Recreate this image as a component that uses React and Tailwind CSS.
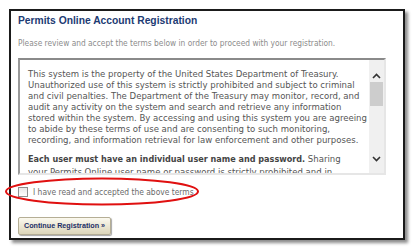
import React from "react";

const TERMS = [
  "This system is the property of the United States Department of Treasury.",
  "Unauthorized use of this system is strictly prohibited and subject to criminal",
  "and civil penalties. The Department of the Treasury may monitor, record, and",
  "audit any activity on the system and search and retrieve any information",
  "stored within the system. By accessing and using this system you are agreeing",
  "to abide by these terms of use and are consenting to such monitoring,",
  "recording, and information retrieval for law enforcement and other purposes.",
];

const FONT = { fontFamily: '"DejaVu Sans Condensed", "Liberation Sans", sans-serif' };
const ARIAL = { fontFamily: '"Liberation Sans", Arial, sans-serif' };

function Chevron({ up }) {
  return (
    <svg width="9" height="6" viewBox="0 0 9 6" className="block">
      <path
        d={up ? "M1 5 L4.5 1.5 L8 5" : "M1 1 L4.5 4.5 L8 1"}
        fill="none"
        stroke="#333"
        strokeWidth="1.6"
      />
    </svg>
  );
}

export default function App() {
  return (
    <div className="relative w-[417px] h-[252px] bg-white overflow-hidden" style={FONT}>
      <div className="ml-[9px] mt-[9px] w-[396px] h-[231px] border-2 border-[#1b1b1b] bg-white px-[7px] shadow-[3px_3px_3px_rgba(0,0,0,0.45)]">
        <h1 className="mt-[3px] text-[10.3px] leading-[14px] font-bold text-[#1d3b73]" style={ARIAL}>
          Permits Online Account Registration
        </h1>
        <p className="mt-[9px] text-[8.3px] leading-[12px] text-[#8c8c8c]">
          Please review and accept the terms below in order to proceed with your registration.
        </p>

        <div className="mt-[9px] flex h-[117px] w-[368px] border-2 border-t-[#8a8a8a] border-l-[#9a9a9a] border-r-[#e6e6e6] border-b-[#e6e6e6] bg-white">
          <div className="flex-1 overflow-hidden pl-[8px] pt-[8px] text-[9.5px] leading-[11px] text-[#555]">
            {TERMS.map((line) => (
              <div key={line} className="whitespace-nowrap">
                {line}
              </div>
            ))}
            <div className="mt-[7px] whitespace-nowrap leading-[13px]">
              <span className="text-[9px] font-bold text-[#444]">
                Each user must have an individual user name and password.
              </span>{" "}
              Sharing
            </div>
            <div className="whitespace-nowrap">
              your Permits Online user name or password is strictly prohibited and in
            </div>
          </div>
          <div className="flex w-[15px] flex-col items-center bg-[#f0f0f0]">
            <div className="mt-[13px]">
              <Chevron up />
            </div>
            <div className="mt-[3px] h-[24px] w-[13px] bg-[#cdcdcd]" />
            <div className="flex-1" />
            <div className="mb-[11px]">
              <Chevron />
            </div>
          </div>
        </div>

        <label className="mt-[11px] flex items-center gap-[5px] text-[8.4px] leading-[12px] text-[#6a6a6a]">
          <span className="block h-[10px] w-[10px] border border-[#8f8f8f] bg-gradient-to-b from-[#e8e8e8] to-white" />
          I have read and accepted the above terms
        </label>

        <button
          type="button"
          style={ARIAL}
          className="mt-[19px] h-[18px] rounded-[2px] border border-[#b5ae95] bg-gradient-to-b from-[#fbf9ef] to-[#ddd6b9] px-[5px] text-[7.2px] font-bold leading-[16px] text-[#1d2f66] shadow-[1px_1px_1px_rgba(0,0,0,0.35)]"
        >
          Continue Registration »
        </button>
      </div>

      <svg className="absolute left-[3px] top-[176px]" width="198" height="31" viewBox="0 0 198 31">
        <ellipse cx="99" cy="15.5" rx="96" ry="13" fill="none" stroke="#e01010" strokeWidth="2" />
      </svg>
    </div>
  );
}
